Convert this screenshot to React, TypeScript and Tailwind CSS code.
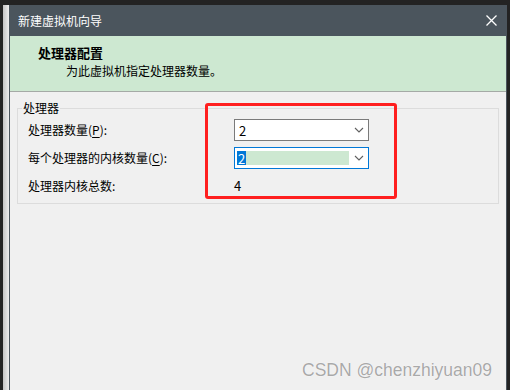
import React from 'react';

function Chevron() {
  return (
    <svg width="10" height="6" viewBox="0 0 10 6" className="text-[#606060]">
      <path d="M1 1 L5 5 L9 1" fill="none" stroke="currentColor" strokeWidth="1.1" />
    </svg>
  );
}

function Mnemonic({ text, keyChar }: { text: string; keyChar: string }) {
  return (
    <span>
      {text}(<span className="underline underline-offset-2">{keyChar}</span>):
    </span>
  );
}

export default function App() {
  return (
    <div className="relative flex h-[390px] w-[510px] overflow-hidden bg-[#232323] pt-[5px] font-['Noto_Sans_CJK_SC','Liberation_Sans',sans-serif] text-[12px] text-black">
      <div className="w-[3px] shrink-0" />
      <div className="w-[6px] shrink-0 bg-gradient-to-r from-[#c4c4c4] to-[#ededed]" />

      {/* wizard window */}
      <div className="flex flex-1 flex-col border-x border-[#4b555d] bg-[#f0f0f0]">
        <div className="flex h-[31px] shrink-0 items-center justify-between bg-[#4b555d] pl-[8px] pr-[9px] text-white">
          <span className="text-[12px] leading-none">新建虚拟机向导</span>
          <svg width="11" height="11" viewBox="0 0 11 11">
            <path d="M0.5 0.5 L10.5 10.5 M10.5 0.5 L0.5 10.5" stroke="white" strokeWidth="1.3" />
          </svg>
        </div>

        <div className="h-[56px] shrink-0 border-b border-[#a5aaa6] bg-[#cde8d1] pl-[28px] pt-[8px]">
          <div className="text-[13px] font-bold leading-[18px]">处理器配置</div>
          <div className="pl-[28px] leading-[18px]">为此虚拟机指定处理器数量。</div>
        </div>

        <fieldset className="mx-[7px] mt-[8px] border border-[#dcdcdc] px-[4px] pb-[6px] pt-[3px]">
          <legend className="px-[1px] leading-[16px]">处理器</legend>
          <div className="flex flex-col gap-[6px] pl-[6px]">
            <div className="flex h-[22px] items-center">
              <div className="w-[206px] shrink-0">
                <Mnemonic text="处理器数量" keyChar="P" />
              </div>
              <div className="flex h-[22px] w-[135px] items-center justify-between border border-[#7a7a7a] bg-white pl-[4px] pr-[4px]">
                <span className="text-[13px] leading-none">2</span>
                <Chevron />
              </div>
            </div>
            <div className="flex h-[22px] items-center">
              <div className="w-[206px] shrink-0">
                <Mnemonic text="每个处理器的内核数量" keyChar="C" />
              </div>
              <div className="flex h-[22px] w-[135px] items-center justify-between border border-[#0078d7] bg-white pl-[2px] pr-[4px]">
                <div className="flex h-[14px] w-[112px] items-center bg-[#cde8d1]">
                  <span className="flex h-[14px] items-center bg-[#0078d7] px-[1px] text-[13px] leading-none text-white">2</span>
                </div>
                <Chevron />
              </div>
            </div>
            <div className="flex h-[22px] items-center">
              <div className="w-[206px] shrink-0">处理器内核总数:</div>
              <span className="text-[13px]">4</span>
            </div>
          </div>
        </fieldset>
      </div>

      <div className="w-[3px] shrink-0" />

      {/* red annotation */}
      <div className="absolute left-[205px] top-[103px] h-[96px] w-[192px] rounded-[3px] border-[3px] border-[#ff1f1f]" />

      {/* watermark */}
      <div className="absolute left-[302px] top-[359px] font-['Liberation_Sans',sans-serif] text-[17.5px] leading-[22px] text-[#a9a9a9] [text-shadow:0_0_1px_#fff,0_0_1px_#fff]">
        CSDN @chenzhiyuan09
      </div>
    </div>
  );
}
